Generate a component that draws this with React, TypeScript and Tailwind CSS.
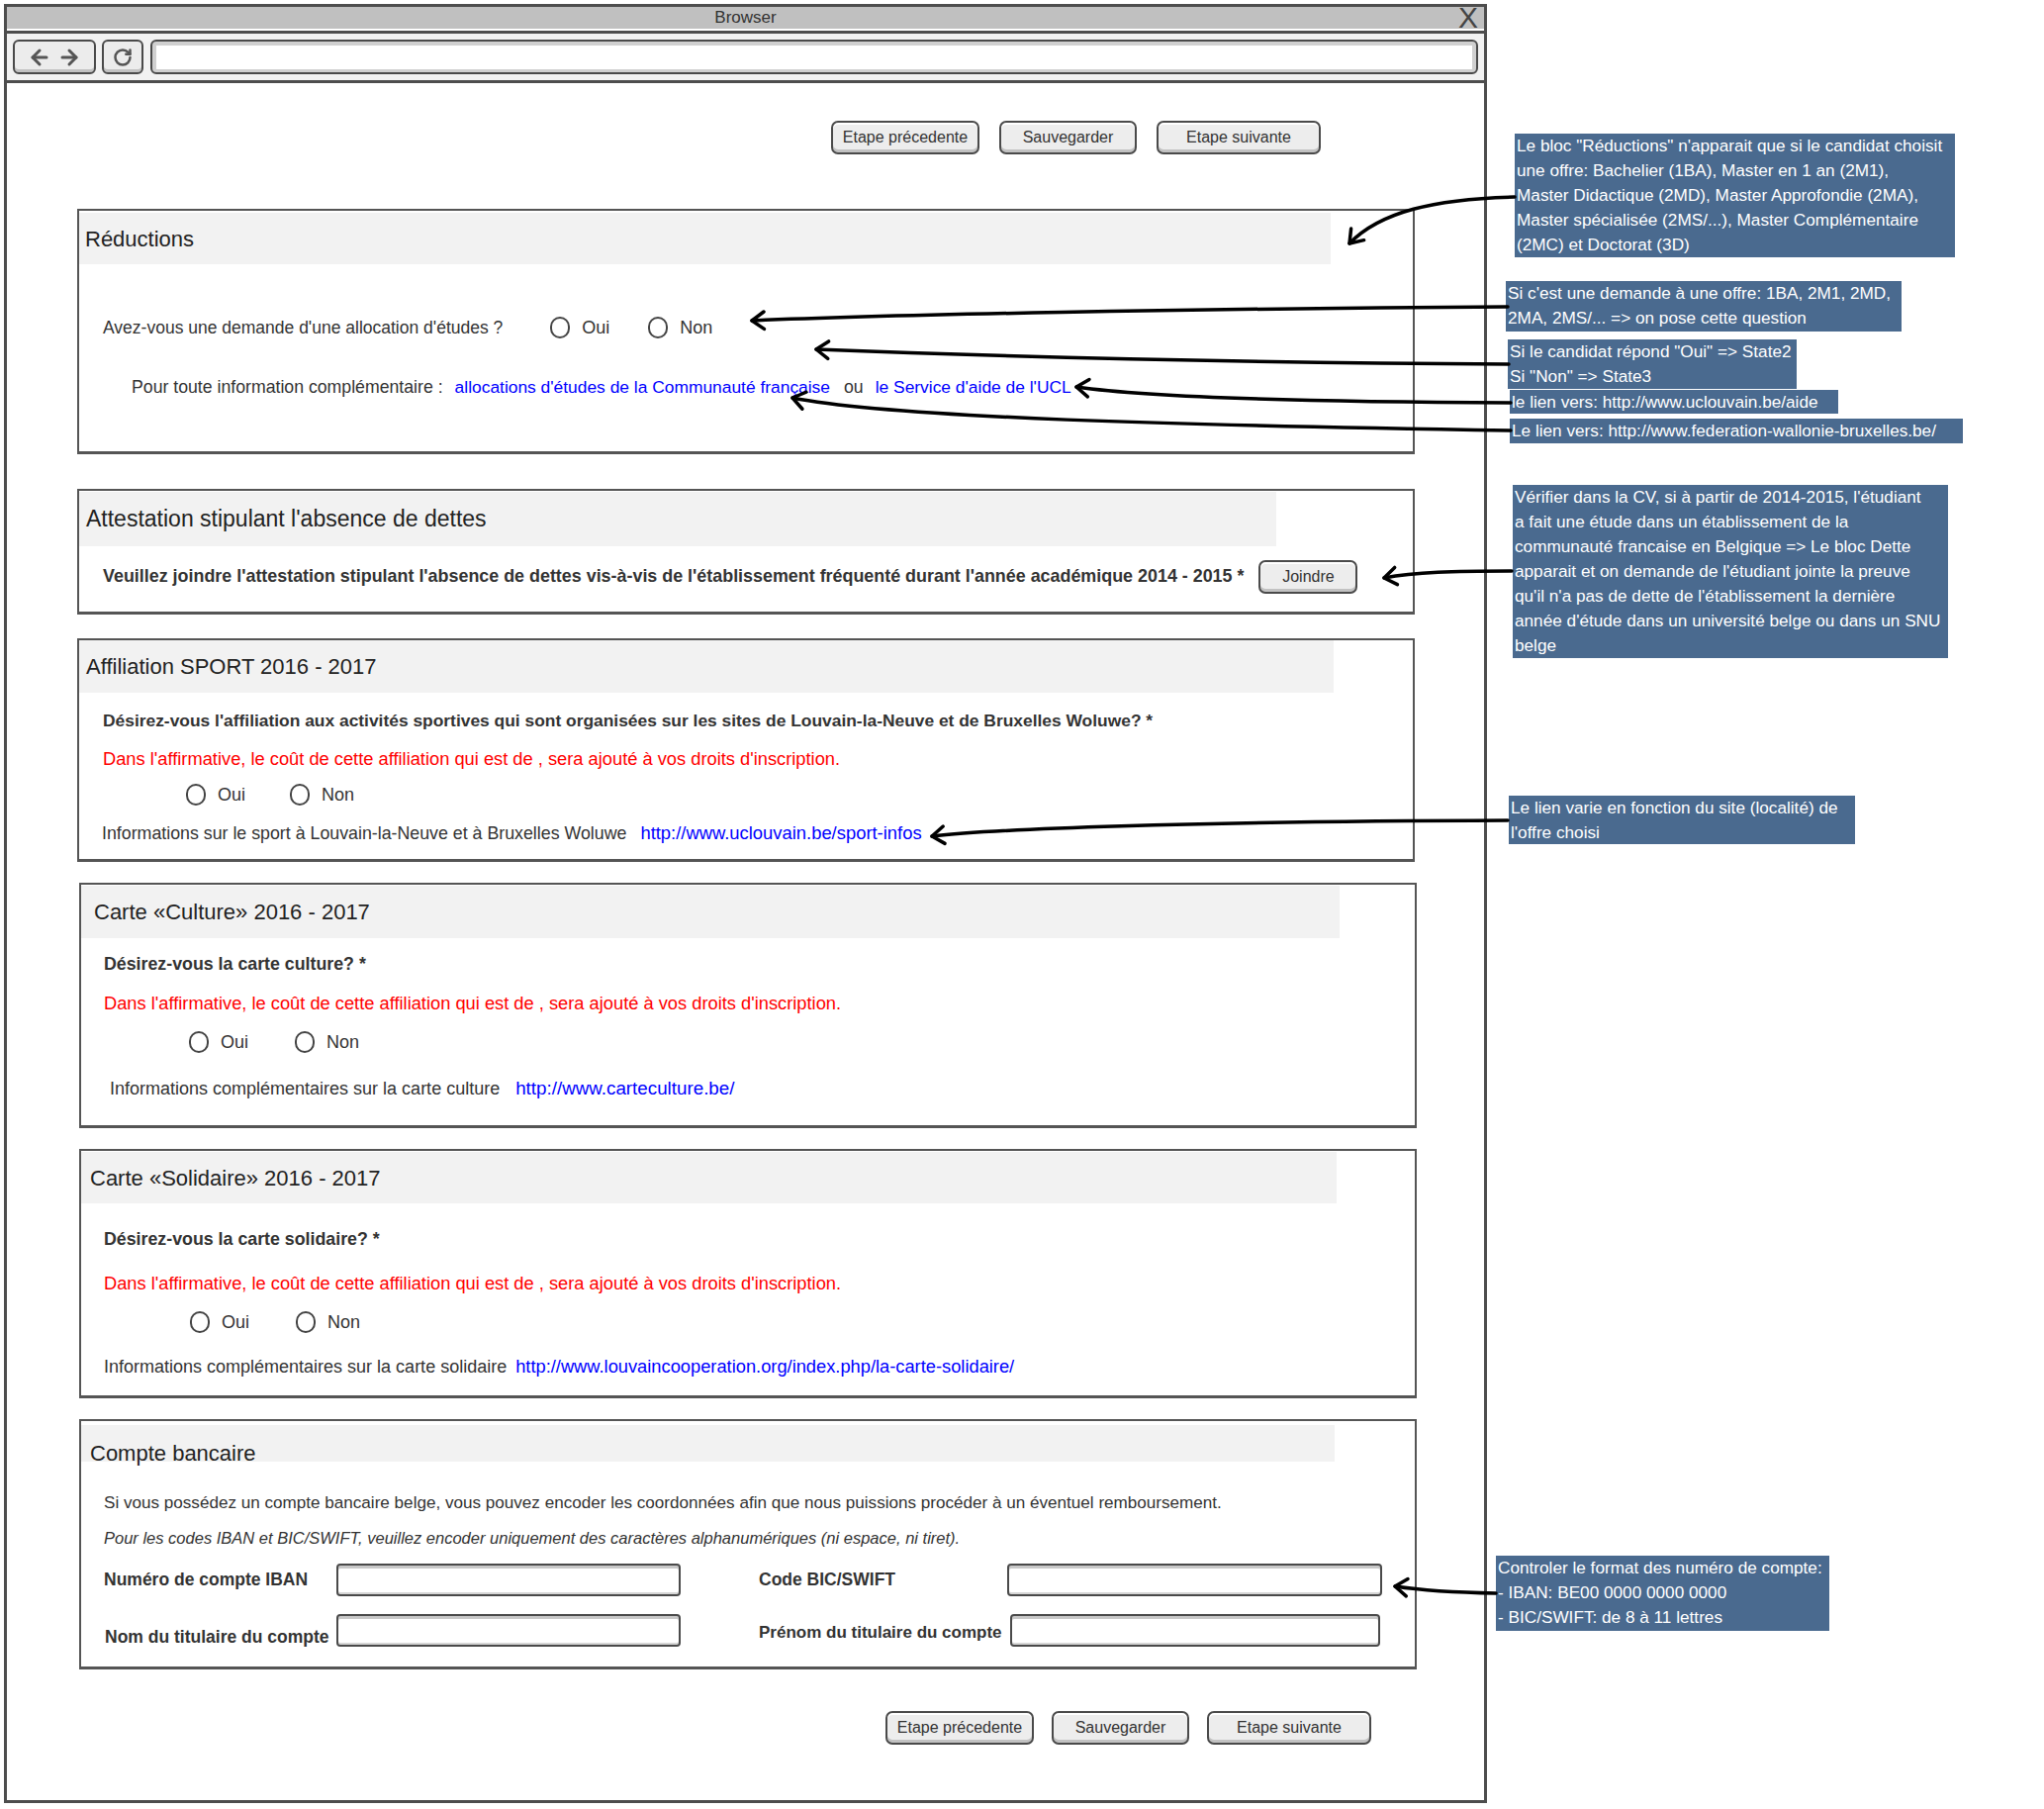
import React from 'react';
import { ArrowLeft, ArrowRight, RotateCw } from 'lucide-react';

const Btn = ({ label, w }: { label: string; w: string }) => (
  <div
    className={`${w} h-[34px] rounded-[7px] border-2 border-[#4a4a4a] bg-[#ededed] shadow-[inset_0_2px_0_#ffffff,inset_0_-3px_0_#c2c2c2] flex items-center justify-center text-[16px] text-[#333]`}
  >
    {label}
  </div>
);

const Radio = ({ label }: { label: string }) => (
  <div className="flex items-center gap-[12px]">
    <span className="w-[20px] h-[22px] rounded-full border-2 border-[#444] bg-white" />
    <span className="text-[18px] text-[#333]">{label}</span>
  </div>
);

const Field = ({ w }: { w: string }) => (
  <div
    className={`${w} h-[33px] rounded-[4px] border-2 border-[#4a4a4a] bg-white shadow-[inset_0_3px_0_#c8c8c8,inset_0_-2px_0_#d6d6d6]`}
  />
);

const head = (tx: number, ty: number, fx: number, fy: number) => {
  const a = Math.atan2(ty - fy, tx - fx);
  const L = 15;
  const s = 0.62;
  const x1 = tx - L * Math.cos(a - s);
  const y1 = ty - L * Math.sin(a - s);
  const x2 = tx - L * Math.cos(a + s);
  const y2 = ty - L * Math.sin(a + s);
  return `M${x1} ${y1} L${tx} ${ty} L${x2} ${y2}`;
};

const arrows: { d: string; t: [number, number, number, number] }[] = [
  { d: 'M1531 199 C1450 201 1395 214 1364 246', t: [1364, 246, 1380, 228] },
  { d: 'M1524 310 C1200 312 900 318 760 324', t: [760, 324, 800, 323] },
  { d: 'M1525 368 C1200 366 950 358 825 353', t: [825, 353, 865, 355] },
  { d: 'M1527 407 C1300 406 1150 400 1088 391', t: [1088, 391, 1120, 394] },
  { d: 'M1527 435 C1200 430 900 422 801 402', t: [801, 402, 840, 411] },
  { d: 'M1528 577 C1470 577 1430 578 1399 584', t: [1399, 584, 1430, 579] },
  { d: 'M1524 829 C1200 830 1000 838 942 845', t: [942, 845, 980, 841] },
  { d: 'M1512 1610 C1460 1609 1430 1606 1410 1603', t: [1410, 1603, 1440, 1606] },
];

const Note = ({ cls, lines }: { cls: string; lines: string[] }) => (
  <div className={`absolute ${cls} bg-[#4a6a8f] text-white text-[17.2px] leading-[25px] pl-[2px] whitespace-nowrap font-['Liberation_Sans',Arial,sans-serif]`}>
    {lines.map((l, i) => (
      <div key={i}>{l}</div>
    ))}
  </div>
);

export default function App() {
  return (
    <div className="relative w-[2066px] h-[1828px] bg-white overflow-hidden font-['Liberation_Sans',Arial,sans-serif] text-[#333]">
      {/* Browser window */}
      <div className="ml-[4px] mt-[4px] w-[1499px] h-[1818px] border-[3px] border-[#4d4d4d] flex flex-col bg-white">
        <div className="h-[24px] bg-[#c0c0c0] border-b-2 border-white relative flex items-center justify-center text-[17px] text-[#333]">
          <span>Browser</span>
          <span className="absolute right-[6px] top-[-4px] text-[30px] leading-[30px] text-[#444]">X</span>
        </div>
        <div className="h-[3px] bg-[#4d4d4d]" />
        <div className="h-[47px] bg-[#f2f2f2] flex items-center pl-[6px] pr-[6px]">
          <div className="w-[84px] h-[35px] rounded-[6px] border-2 border-[#4a4a4a] bg-[#ececec] shadow-[inset_0_-3px_0_#c2c2c2] flex items-center justify-center gap-[6px]">
            <ArrowLeft size={24} strokeWidth={3} color="#555" />
            <ArrowRight size={24} strokeWidth={3} color="#555" />
          </div>
          <div className="ml-[6px] w-[42px] h-[35px] rounded-[6px] border-2 border-[#4a4a4a] bg-[#ececec] shadow-[inset_0_-3px_0_#c2c2c2] flex items-center justify-center">
            <RotateCw size={20} strokeWidth={3} color="#555" />
          </div>
          <div className="ml-[7px] flex-1 h-[35px] rounded-[6px] border-2 border-[#4a4a4a] bg-white shadow-[inset_0_4px_0_#d0d0d0,inset_0_-3px_0_#d0d0d0,inset_4px_0_0_#d0d0d0,inset_-4px_0_0_#d0d0d0]" />
        </div>
        <div className="h-[3px] bg-[#4d4d4d]" />

        {/* content */}
        <div className="flex flex-col">
          <div className="mt-[38px] flex justify-end pr-[165px] gap-[20px]">
            <Btn label="Etape précedente" w="w-[150px]" />
            <Btn label="Sauvegarder" w="w-[139px]" />
            <Btn label="Etape suivante" w="w-[166px]" />
          </div>

          {/* Réductions */}
          <div className="mt-[55px] ml-[71px] w-[1352px] h-[248px] border-2 border-b-[3px] border-[#555]">
            <div className="mt-[2px] h-[52px] w-[1265px] bg-[#f2f2f2] flex items-center pl-[6px] text-[22px] text-[#222]">Réductions</div>
            <div className="mt-[49px] h-[30px] flex items-center pl-[24px]">
              <span className="text-[17.5px]">Avez-vous une demande d'une allocation d'études ?</span>
              <div className="ml-[48px] flex items-center gap-[39px]">
                <Radio label="Oui" />
                <Radio label="Non" />
              </div>
            </div>
            <div className="mt-[30px] h-[30px] flex items-center pl-[53px] text-[17.7px]">
              <span>Pour toute information complémentaire :</span>
              <span className="ml-[12px] text-[17.4px] text-[#0000ff]">allocations d'études de la Communauté française</span>
              <span className="ml-[14px]">ou</span>
              <span className="ml-[12px] text-[17.4px] text-[#0000ff]">le Service d'aide de l'UCL</span>
            </div>
          </div>

          {/* Attestation */}
          <div className="mt-[35px] ml-[71px] w-[1352px] h-[127px] border-2 border-b-[3px] border-[#555]">
            <div className="mt-px h-[55px] w-[1210px] bg-[#f2f2f2] flex items-center pl-[7px] text-[23px] text-[#222]">Attestation stipulant l'absence de dettes</div>
            <div className="mt-[14px] h-[33px] flex items-center pl-[24px]">
              <span className="text-[17.9px] font-bold whitespace-nowrap">
                Veuillez joindre l'attestation stipulant l'absence de dettes vis-à-vis de l'établissement fréquenté durant l'année académique 2014 - 2015 *
              </span>
              <div className="ml-[15px]">
                <Btn label="Joindre" w="w-[100px]" />
              </div>
            </div>
          </div>

          {/* Sport */}
          <div className="mt-[24px] ml-[71px] w-[1352px] h-[226px] border-2 border-b-[3px] border-[#555]">
            <div className="h-[53px] w-[1268px] bg-[#f2f2f2] flex items-center pl-[7px] text-[22px] text-[#222]">Affiliation SPORT 2016 - 2017</div>
            <div className="mt-[15px] h-[26px] flex items-center pl-[24px] text-[17.4px] font-bold">
              Désirez-vous l'affiliation aux activités sportives qui sont organisées sur les sites de Louvain-la-Neuve et de Bruxelles Woluwe? *
            </div>
            <div className="mt-[13px] h-[26px] flex items-center pl-[24px] text-[18.3px] text-[#ff0000]">
              Dans l'affirmative, le coût de cette affiliation qui est de , sera ajouté à vos droits d'inscription.
            </div>
            <div className="mt-[10px] h-[26px] flex items-center pl-[108px] gap-[45px]">
              <Radio label="Oui" />
              <Radio label="Non" />
            </div>
            <div className="mt-[13px] h-[26px] flex items-center pl-[23px]">
              <span className="text-[17.8px]">Informations sur le sport à Louvain-la-Neuve et à Bruxelles Woluwe</span>
              <span className="ml-[14px] text-[18.4px] text-[#0000ff]">http://www.uclouvain.be/sport-infos</span>
            </div>
          </div>

          {/* Culture */}
          <div className="mt-[21px] ml-[73px] w-[1352px] h-[248px] border-2 border-b-[3px] border-[#555]">
            <div className="mt-px h-[53px] w-[1272px] bg-[#f2f2f2] flex items-center pl-[13px] text-[22px] text-[#222]">Carte «Culture» 2016 - 2017</div>
            <div className="mt-[13px] h-[26px] flex items-center pl-[23px] text-[17.8px] font-bold">Désirez-vous la carte culture? *</div>
            <div className="mt-[14px] h-[26px] flex items-center pl-[23px] text-[18.3px] text-[#ff0000]">
              Dans l'affirmative, le coût de cette affiliation qui est de , sera ajouté à vos droits d'inscription.
            </div>
            <div className="mt-[13px] h-[26px] flex items-center pl-[109px] gap-[47px]">
              <Radio label="Oui" />
              <Radio label="Non" />
            </div>
            <div className="mt-[21px] h-[26px] flex items-center pl-[29px]">
              <span className="text-[18px]">Informations complémentaires sur la carte culture</span>
              <span className="ml-[16px] text-[18.8px] text-[#0000ff]">http://www.carteculture.be/</span>
            </div>
          </div>

          {/* Solidaire */}
          <div className="mt-[21px] ml-[73px] w-[1352px] h-[252px] border-2 border-b-[3px] border-[#555]">
            <div className="mt-px h-[52px] w-[1269px] bg-[#f2f2f2] flex items-center pl-[9px] text-[22px] text-[#222]">Carte «Solidaire» 2016 - 2017</div>
            <div className="mt-[23px] h-[26px] flex items-center pl-[23px] text-[17.8px] font-bold">Désirez-vous la carte solidaire? *</div>
            <div className="mt-[19px] h-[26px] flex items-center pl-[23px] text-[18.3px] text-[#ff0000]">
              Dans l'affirmative, le coût de cette affiliation qui est de , sera ajouté à vos droits d'inscription.
            </div>
            <div className="mt-[13px] h-[26px] flex items-center pl-[110px] gap-[47px]">
              <Radio label="Oui" />
              <Radio label="Non" />
            </div>
            <div className="mt-[19px] h-[26px] flex items-center pl-[23px]">
              <span className="text-[18px]">Informations complémentaires sur la carte solidaire</span>
              <span className="ml-[9px] text-[18.3px] text-[#0000ff]">http://www.louvaincooperation.org/index.php/la-carte-solidaire/</span>
            </div>
          </div>

          {/* Compte bancaire */}
          <div className="mt-[21px] ml-[73px] w-[1352px] h-[253px] border-2 border-b-[3px] border-[#555]">
            <div className="mt-[4px] h-[37px] w-[1267px] bg-[#f2f2f2] flex items-end pl-[9px] text-[22px] text-[#222] leading-none">
              <span className="translate-y-[3px]">Compte bancaire</span>
            </div>
            <div className="mt-[29px] h-[26px] flex items-center pl-[23px] text-[17.1px] whitespace-nowrap">
              Si vous possédez un compte bancaire belge, vous pouvez encoder les coordonnées afin que nous puissions procéder à un éventuel remboursement.
            </div>
            <div className="mt-[9px] h-[26px] flex items-center pl-[23px] text-[16.5px] italic whitespace-nowrap">
              Pour les codes IBAN et BIC/SWIFT, veuillez encoder uniquement des caractères alphanumériques (ni espace, ni tiret).
            </div>
            <div className="mt-[12px] h-[34px] flex items-center pl-[23px]">
              <span className="w-[235px] text-[17.5px] font-bold whitespace-nowrap">Numéro de compte IBAN</span>
              <Field w="w-[348px]" />
              <span className="ml-[79px] w-[251px] text-[17.5px] font-bold whitespace-nowrap">Code BIC/SWIFT</span>
              <Field w="w-[379px]" />
            </div>
            <div className="mt-[17px] h-[34px] flex items-center pl-[24px]">
              <span className="w-[234px] text-[17.5px] font-bold whitespace-nowrap translate-y-[7px]">Nom du titulaire du compte</span>
              <Field w="w-[348px]" />
              <span className="ml-[79px] w-[254px] text-[17px] font-bold whitespace-nowrap translate-y-[3px]">Prénom du titulaire du compte</span>
              <Field w="w-[374px]" />
            </div>
          </div>

          <div className="mt-[42px] flex justify-end pr-[114px] gap-[18px]">
            <Btn label="Etape précedente" w="w-[150px]" />
            <Btn label="Sauvegarder" w="w-[139px]" />
            <Btn label="Etape suivante" w="w-[166px]" />
          </div>
        </div>
      </div>

      {/* Annotations */}
      <Note
        cls="left-[1531px] top-[135px] w-[445px] h-[125px]"
        lines={[
          'Le bloc "Réductions" n\'apparait que si le candidat choisit',
          'une offre: Bachelier (1BA), Master en 1 an (2M1),',
          'Master Didactique (2MD), Master Approfondie (2MA),',
          'Master spécialisée (2MS/...), Master Complémentaire',
          '(2MC) et Doctorat (3D)',
        ]}
      />
      <Note
        cls="left-[1522px] top-[284px] w-[400px] h-[51px]"
        lines={["Si c'est une demande à une offre: 1BA, 2M1, 2MD,", '2MA, 2MS/... => on pose cette question']}
      />
      <Note cls="left-[1524px] top-[343px] w-[292px] h-[50px]" lines={['Si le candidat répond "Oui" => State2', 'Si "Non" => State3']} />
      <Note cls="left-[1526px] top-[394px] w-[332px] h-[24px] leading-[24px]" lines={['le lien vers: http://www.uclouvain.be/aide']} />
      <Note cls="left-[1526px] top-[423px] w-[458px] h-[25px]" lines={['Le lien vers: http://www.federation-wallonie-bruxelles.be/']} />
      <Note
        cls="left-[1529px] top-[490px] w-[440px] h-[175px]"
        lines={[
          "Vérifier dans la CV, si à partir de 2014-2015, l'étudiant",
          'a fait une étude dans un établissement de la',
          'communauté francaise en Belgique => Le bloc Dette',
          "apparait  et on demande de l'étudiant jointe la preuve",
          "qu'il n'a pas de dette de l'établissement la dernière",
          "année d'étude dans un université belge ou dans un SNU",
          'belge',
        ]}
      />
      <Note cls="left-[1525px] top-[804px] w-[350px] h-[49px]" lines={['Le lien varie en fonction du site (localité) de', "l'offre choisi"]} />
      <Note
        cls="left-[1512px] top-[1572px] w-[337px] h-[76px]"
        lines={['Controler le format des numéro de compte:', '- IBAN: BE00 0000 0000 0000', '- BIC/SWIFT: de 8 à 11 lettres']}
      />

      {/* Arrows */}
      <svg className="absolute left-0 top-0 pointer-events-none" width={2066} height={1828} viewBox="0 0 2066 1828">
        {arrows.map((a, i) => (
          <g key={i} fill="none" stroke="#000" strokeWidth={3.5} strokeLinecap="round" strokeLinejoin="round">
            <path d={a.d} />
            <path d={head(a.t[0], a.t[1], a.t[2], a.t[3])} />
          </g>
        ))}
      </svg>
    </div>
  );
}
